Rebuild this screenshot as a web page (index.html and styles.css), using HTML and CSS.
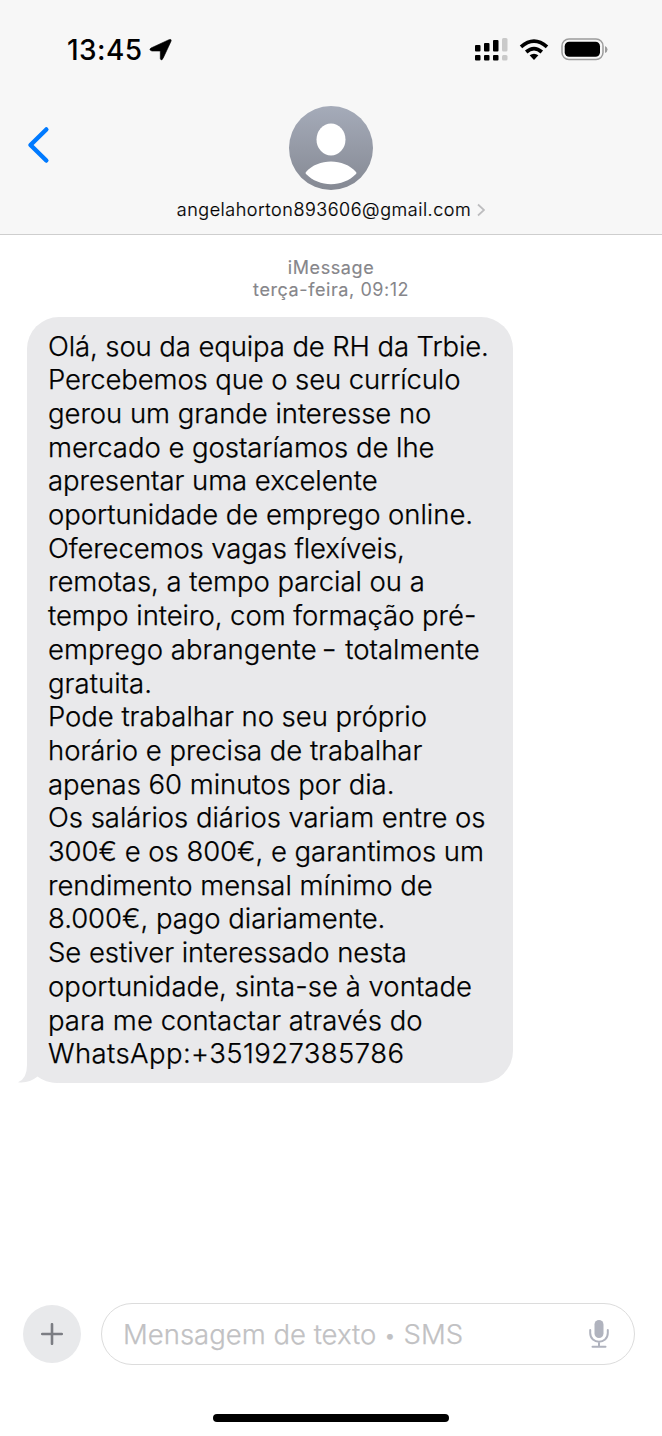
FILE: index.html
```html
<!DOCTYPE html>
<html lang="pt">
<head>
<meta charset="utf-8">
<title>iMessage</title>
<link rel="stylesheet" href="styles.css">
</head>
<body>
<div class="phone">
  <header class="header">
    <div class="status">
      <div class="clock"><span class="time">13:45</span>
        <svg class="location" width="24" height="24" viewBox="0 0 24 24"><path d="M20 1.700Q23 .7 21.900 3.500L14 20.500Q12.200 23.500 11.300 20.500V13H3Q-.6 12 2 10Z" stroke="#000" stroke-width=".6"/></svg>
      </div>
      <div class="indicators">
        <svg width="34" height="24" viewBox="0 0 34 24"><g fill="#000"><rect x="1" y="7" width="5.500" height="6.500" rx="1"/><rect x="10" y="5" width="5.500" height="8.500" rx="1"/><rect x="19" y="2" width="5.500" height="11.500" rx="1"/><rect x="1" y="17" width="5.500" height="5.500" rx="1"/><rect x="10" y="17" width="5.500" height="5.500" rx="1"/><rect x="19" y="17" width="5.500" height="5.500" rx="1"/></g><g fill="#c9c9c9"><rect x="28" y="0" width="5.500" height="13.500" rx="1.500"/><rect x="28" y="17" width="5.500" height="5.500" rx="1.500"/></g></svg>
        <svg class="wifi" width="30" height="22" viewBox="0 0 30 22"><g fill="none" stroke="#000" stroke-width="3.700"><path d="M2 7.800Q15-3.600 28 7.800"/><path d="M7.200 13Q15 6.200 22.800 13"/></g><path d="M10.600 16.300Q15 13 19.400 16.300L15 20.900Z"/></svg>
        <svg class="battery" width="47" height="24" viewBox="0 0 47 24"><rect x="1" y="1" width="41" height="20.500" rx="7" fill="none" stroke="#9c9c9c" stroke-width="1.500"/><rect x="3.700" y="3.700" width="35.300" height="15" rx="4.500"/><path d="M44 8Q46.500 9 46.500 11.500T44 15Z" fill="#9c9c9c"/></svg>
      </div>
    </div>
    <div class="contact">
      <svg class="back" width="24" height="38" viewBox="0 0 24 38"><path d="M19.300 3.500L3.500 19L19.300 34.500"/></svg>
      <div class="person">
        <svg class="avatar" width="84" height="84" viewBox="0 0 84 84"><defs><linearGradient id="sky" x2="0" y2="1"><stop stop-color="#a5abb9"/><stop offset="1" stop-color="#858993"/></linearGradient></defs><circle cx="42" cy="42" r="42" fill="url(#sky)"/><ellipse cx="42" cy="33.500" rx="14.500" ry="16" fill="#fff"/><path d="M17 66C29 52 55 52 67 66Q68 67 67 68C54 81.500 30 81.500 17 68Q16 67 17 66Z" fill="#fff"/></svg>
        <div class="address"><span class="email">angelahorton893606@gmail.com</span><svg width="8" height="14" viewBox="0 0 8 14"><path d="M1 1.500L7 7L1 12.500"/></svg></div>
      </div>
    </div>
  </header>
  <main class="thread">
    <div class="stamp"><div class="service">iMessage</div><div class="date"><span class="day">terça-feira,</span> 09:12</div></div>
    <div class="bubble">
      <p><span class="tight">Olá, sou da equipa de RH da Trbie.</span><br><span class="tight">Percebemos que o seu currículo</span><br>gerou um grande interesse no<br>mercado e gostaríamos de lhe<br>apresentar uma excelente<br>oportunidade de emprego online.<br><span class="tight">Oferecemos vagas flexíveis,</span><br>remotas, a tempo parcial ou a<br>tempo inteiro, com formação pré-<br><span class="loose">emprego abrangente <span class="dash">–</span> totalmente</span><br><span class="loose">gratuita.</span></p>
      <p>Pode trabalhar no seu próprio<br>horário e precisa de trabalhar<br>apenas 60 minutos por dia.</p>
      <p>Os salários diários variam entre os<br>300€ e os 800€, e garantimos um<br>rendimento mensal mínimo de<br>8.000€, pago diariamente.</p>
      <p>Se estiver interessado nesta<br><span class="loose">oportunidade, sinta-se à vontade</span><br><span class="loose">para me contactar através do</span><br><span class="number">WhatsApp:+351927385786</span></p>
      <svg class="tail" width="40" height="40" viewBox="0 0 40 40"><path d="M9 0V22Q9 36 0 39.200Q11 40.500 19.500 33.500Q27 39.500 40 40V0Z"/></svg>
    </div>
  </main>
  <footer class="composer">
    <div class="entry">
      <div class="plus"><svg width="22" height="22" viewBox="0 0 22 22"><path d="M11 1.200V20.800M1.200 11H20.800"/></svg></div>
      <div class="field"><span>Mensagem de texto <span class="dot">•</span> SMS</span>
        <svg class="mic" width="20" height="30" viewBox="0 0 20 30"><rect x="5.500" y="1" width="9" height="18" rx="4.500" fill="#b0b3be"/><path d="M1.200 11V14C1.200 25.500 18.800 25.500 18.800 14V11M10 23V27.500M3.500 27.800H16.500"/></svg>
      </div>
    </div>
    <div class="home"></div>
  </footer>
</div>
</body>
</html>
```
FILE: styles.css
```css
* { box-sizing: border-box; }
body { margin: 0; background: #fff; color: #000; font-family: Inter, "Liberation Sans", sans-serif; }
p { margin: 0; }
svg { display: block; flex: none; }
.phone { height: 1436px; display: flex; flex-direction: column; }
.header { height: 235px; background: #f7f7f7; border-bottom: 1px solid #cecece; }
.status { display: flex; justify-content: space-between; padding: 37px 54px 0 67px; height: 106px; }
.clock { display: flex; gap: 6px; height: 26px; align-items: center; }
.time { font-size: 28px; font-weight: 500; line-height: 26px; letter-spacing: .45px; }
.indicators { display: flex; padding-top: 1px; }
.wifi { margin: 1px 0 0 11px; }
.battery { margin-left: 12px; }
.contact { display: grid; grid-template-columns: 1fr auto 1fr; }
.back { margin: 20px 0 0 27px; }
.back path { fill: none; stroke: #007aff; stroke-width: 4.500; stroke-linecap: round; stroke-linejoin: round; }
.person { display: flex; flex-direction: column; align-items: center; }
.address { display: flex; align-items: center; gap: 6px; margin-top: 8px; height: 24px; }
.email { font-size: 18px; font-weight: 300; -webkit-text-stroke: .2px currentColor; line-height: 24px; letter-spacing: .53px; }
.address path { fill: none; stroke: #bdbdbf; stroke-width: 1.700; }
.thread { flex: 1; padding: 22px 27px 0; }
.stamp { color: #86868a; font-size: 18px; line-height: 22px; text-align: center; letter-spacing: .5px; }
.service, .day { -webkit-text-stroke: .15px currentColor; letter-spacing: .6px; }
.bubble { position: relative; z-index: 0; width: 486px; height: 766px; margin-top: 16px; padding: 12.500px 0 0 21px; border-radius: 32px; background: #e9e9eb; font-size: 27.500px; font-weight: 300; -webkit-text-stroke: .25px currentColor; line-height: 33.700px; letter-spacing: -.04px; white-space: nowrap; }
.tight { letter-spacing: -.11px; }
.loose { letter-spacing: .04px; }
.dash { display: inline-block; width: 13px; transform: scaleX(.75); transform-origin: left; }
.number { letter-spacing: .41px; }
.tail { position: absolute; z-index: -1; left: -9px; bottom: 0; }
.tail path { fill: #e9e9eb; }
.composer { height: 133px; padding: 0 27px 0 23px; }
.entry { display: flex; align-items: center; gap: 20px; }
.plus { width: 58px; height: 58px; border-radius: 50%; background: #e8e9eb; display: grid; place-items: center; }
.plus path { stroke: #7b7d83; stroke-width: 2.600; stroke-linecap: round; }
.field { flex: 1; height: 62px; border: 1.500px solid #dcdcdc; border-radius: 31px; padding: 0 25px 0 21px; display: flex; align-items: center; justify-content: space-between; color: #c1c1c3; font-size: 27.500px; font-weight: 300; -webkit-text-stroke: .25px currentColor; letter-spacing: 0; }
.dot { font-size: 21px; vertical-align: 1px; }
.mic path { fill: none; stroke: #b0b3be; stroke-width: 2; stroke-linecap: round; }
.home { width: 236px; height: 8px; border-radius: 4px; background: #000; margin: 49px auto 0 190px; }
```
